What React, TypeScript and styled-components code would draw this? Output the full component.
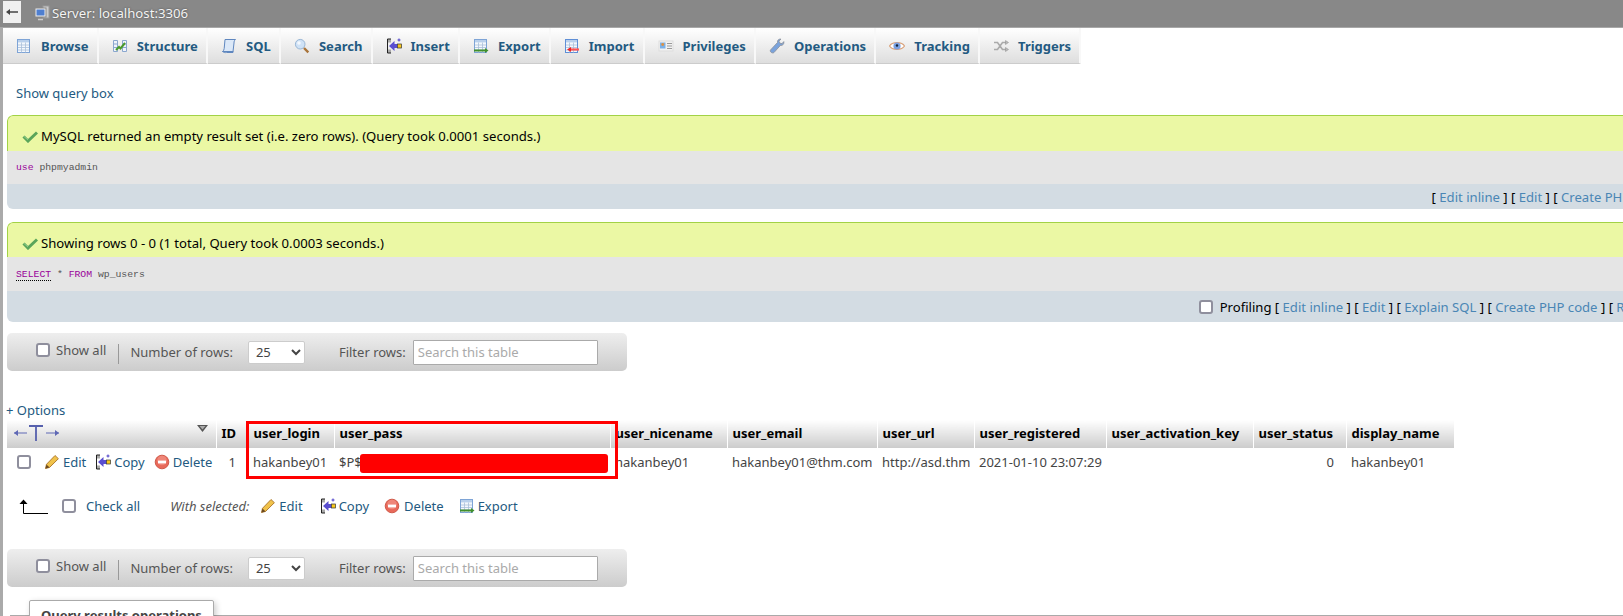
import React from "react";
import styled, { createGlobalStyle } from "styled-components";

const Global = createGlobalStyle`
  html, body { margin: 0; padding: 0; height: 616px; overflow: hidden; background: #fff; }
  body { font-family: "Noto Sans", "Open Sans", sans-serif; font-size: 13px; color: #444; }
  #root { width: 1623px; height: 616px; overflow: hidden; }
`;

const TopBar = styled.header`
  width: 1623px; height: 27px; background: #888; display: flex; align-items: flex-start;
  border-bottom: 1px solid #a8a8a8; box-sizing: content-box;
`;
const BackButton = styled.div`
  width: 18px; height: 22px; margin: 1px 0 0 3px; background: #f0f0f0; display: flex; align-items: center; justify-content: center;
`;
const ServerLabel = styled.div`
  display: flex; align-items: center; gap: 2px; margin: 4px 0 0 13px; height: 18px; color: #f4f4f4;
  text-shadow: 0 0 2px #444; font-size: 13.2px; white-space: nowrap;
`;
const Body = styled.div`
  width: 1679px; border-left: 3px solid #aaa; height: 588px; box-sizing: border-box;
`;
const Tabs = styled.nav`
  display: flex; height: 36px; width: max-content;
`;
const Tab = styled.a`
  display: flex; align-items: center; gap: 9px; height: 36px; box-sizing: border-box; padding: 0 8.2px 0 13px;
  font-weight: 700; color: #235a81; background: linear-gradient(#fff, #dedede); border-bottom: 1px solid #ccc;
  border-right: 2px solid #f8f8f8; white-space: nowrap;
`;
const QueryLink = styled.a`
  display: block; color: #235a81; margin: 20px 0 0 13px; height: 18px; line-height: 18px;
`;
const Message = styled.section<{ $top: number }>`
  margin: ${p => p.$top}px 0 0 4px; border-radius: 6px 6px 0 6px; overflow: hidden;
`;
const Success = styled.div<{ $h: number }>`
  height: ${p => p.$h}px; box-sizing: border-box; background: #ebf8a4; border: 1px solid #a2d246; border-width: 1px 0 0 1px;
  border-radius: 6px 0 0 0; display: flex; align-items: flex-start; gap: 3px; padding: 11px 0 0 14px; color: #000; font-size: 13.12px; line-height: 18px;
`;
const SqlBox = styled.pre<{ $h: number }>`
  height: ${p => p.$h}px; margin: 0; padding: 0 0 0 9px; box-sizing: border-box; background: #e5e5e5; display: flex; align-items: center; white-space: pre;
  font-family: "Liberation Mono", monospace; font-size: 9.75px; color: #555;
`;
const Keyword = styled.span<{ $doc?: boolean }>`
  color: #909; ${p => p.$doc ? "border-bottom: 1px dotted #000;" : ""}
`;
const ToolBar = styled.div<{ $h: number }>`
  height: ${p => p.$h}px; background: #d3dce3; display: flex; align-items: center; justify-content: flex-end; padding-right: 8px; color: #000; white-space: pre; font-size: 13.1px;
`;
const ToolLink = styled.a`color: #4a86b5;`;
const Box = styled.input.attrs({ type: "checkbox" })<{ $m?: string }>`
  appearance: none; width: 14px; height: 14px; margin: ${p => p.$m ?? "0"}; box-sizing: border-box; flex: none;
  border: 2px solid #8f8f9d; border-radius: 3px; background: #fff;
`;
const Pager = styled.div<{ $top: number }>`
  margin: ${p => p.$top}px 0 0 4px; width: 620px; height: 38px; border-radius: 5px; box-sizing: border-box;
  background: linear-gradient(#eee, #ccc); display: flex; align-items: center; padding-left: 29px; color: #555;
`;
const ShowAll = styled.label`
  display: flex; align-items: center; gap: 6px; margin-top: -4px;
`;
const Divider = styled.span`
  width: 1px; height: 20px; background: #999; margin: 4px 11px 0 12px;
`;
const RowSelect = styled.select`
  width: 57px; height: 23px; margin-left: 15px; background: #fff; border: 1px solid #ccc; border-radius: 2px;
  font: 13px "Noto Sans", sans-serif; color: #444; padding-left: 3px;
`;
const FilterLabel = styled.span`margin-left: 34px;`;
const Filter = styled.input`
  width: 185px; height: 25px; margin-left: 7px; box-sizing: border-box; border: 1px solid #aaa; background: #fff; border-radius: 1px;
  font: 13px "Noto Sans", sans-serif; padding: 0 4px; &::placeholder { color: #aaa; opacity: 1; }
`;
const Options = styled.a`
  display: block; color: #235a81; margin: 30px 0 0 3px; height: 19px; line-height: 19px;
`;
const TableWrap = styled.div`
  position: relative; margin-left: 4px; width: max-content;
`;
const Grid = styled.table`
  table-layout: fixed; border-collapse: collapse; width: 1447px;
`;
const Head = styled.th<{ $w: number }>`
  width: ${p => p.$w}px; height: 28px; box-sizing: border-box; padding: 0 5px 2px; text-align: left; color: #000; font-weight: 700; font-size: 13px;
  background: linear-gradient(#fff, #ccc); border-right: 1px solid #fff; white-space: nowrap; overflow: hidden;
`;
const HeadInner = styled.div`
  display: flex; align-items: center; justify-content: space-between; padding: 0 3px 0 1px;
  & > svg:last-child { margin-top: -9px; }
`;
const Cell = styled.td<{ $right?: boolean }>`
  height: 31px; box-sizing: border-box; padding: 0 ${p => p.$right ? "12px" : "5px"} 3px 5px; text-align: ${p => p.$right ? "right" : "left"}; white-space: nowrap; color: #444; position: relative;
`;
const ActionsRow = styled.div`
  display: flex; align-items: center; padding-left: 5px;
`;
const Action = styled.a<{ $gap?: number; $m?: number }>`
  display: inline-flex; align-items: center; gap: ${p => p.$gap ?? 3}px; color: #235a81; margin-left: ${p => p.$m ?? 0}px;
`;
const Frame = styled.div`
  position: absolute; left: 239px; top: 1px; width: 372px; height: 58px; box-sizing: border-box; border: 3px solid #f00; pointer-events: none;
`;
const Redaction = styled.span`
  position: absolute; left: 26px; top: 6px; width: 248px; height: 19px; background: #f00; border-radius: 3px;
`;
const BulkBar = styled.div`
  display: flex; align-items: center; margin: 15px 0 0 16px; height: 24px;
`;
const CheckAll = styled.a`color: #235a81; margin-left: 10px;`;
const WithSelected = styled.em`margin-left: 30px; color: #555;`;
const OpsSet = styled.fieldset`
  margin: 13px 0 0 7px; padding: 0; border: 0; border-top: 1px solid #aaa; height: 30px;
`;
const OpsLegend = styled.legend`
  margin-left: 19px; padding: 5px 11px; width: 185px; box-sizing: border-box; border: 1px solid #aaa; border-radius: 2px 2px 0 0; background: #fff;
  box-shadow: 2px 2px 6px rgba(0,0,0,.2); font-weight: 700; color: #444; line-height: 18px; white-space: nowrap;
`;
const Glyph = styled.svg`flex: none; display: block;`;

type S = { size?: number };
const Ic = ({ size = 16, children }: S & { children: React.ReactNode }) => (
  <Glyph width={size} height={size} viewBox="0 0 16 16" fill="none">{children}</Glyph>
);
const TableLines = ({ c }: { c: string }) => (
  <>
    <rect x="1.5" y="1.500" width="12" height="13" fill="#f4f8fd" stroke={c} />
    <rect x="2" y="2" width="11" height="2.400" fill="#b9d0ec" />
    <path d="M2 7h11M2 9.500h11M2 12h11M5.500 4.500v10M9.500 4.500v10" stroke="#a9bfd9" strokeWidth=".8" />
  </>
);
const Browse = () => <Ic><TableLines c="#7ea4d6" /></Ic>;
const Structure = () => (
  <Ic>
    <path d="M1.500 2.500h4v11h-4zM10.500 2.500h4v11h-4z" fill="#f0f4fb" stroke="#8aa7cf" />
    <path d="M1.500 6h4M1.500 9.500h4M10.500 6h4M10.500 9.500h4" stroke="#8aa7cf" />
    <path d="M4 12l3-3 1.500 1.500L13 5" stroke="#4a9a2c" strokeWidth="2" />
  </Ic>
);
const Sql = () => (
  <Ic>
    <path d="M4 1.500h10.500c-1.200 1-1.500 2-1.500 3.500L12 13.500H1.500c1-.6 1.600-1.500 1.700-3z" fill="#dbe8f8" stroke="#5f87bf" />
    <path d="M1.500 13.500c1.500 1.300 3 1.200 4 1h6.500l.5-1" stroke="#5f87bf" />
  </Ic>
);
const Search = () => (
  <Ic>
    <circle cx="6.200" cy="6.200" r="4.800" fill="#cfe2f6" stroke="#9ab7d6" />
    <circle cx="5" cy="5" r="1.800" fill="#f3f8fe" />
    <path d="M10 10l4.300 4.300" stroke="#a8743a" strokeWidth="2.400" />
  </Ic>
);
const Insert = () => (
  <Ic>
    <rect x="1.500" y="1" width="3.500" height="3.500" fill="#aaa" />
    <rect x="1.500" y="11.500" width="3.500" height="3.500" fill="#aaa" />
    <path d="M5 1h-3.500v14H5" stroke="#222" />
    <path d="M3 8l5.500-5v3H11.500v4H8.500v3z" fill="#5a4fd0" />
    <rect x="11.500" y="6" width="4" height="4" fill="#f7c81e" stroke="#333" strokeWidth=".7" />
    <path d="M13 .5v3M11.500 2h3" stroke="#4a3fc8" strokeWidth="1" />
  </Ic>
);
const Export = () => (
  <Ic>
    <TableLines c="#7ea4d6" />
    <path d="M1 12.500h11" stroke="#3f8f2b" strokeWidth="2" /><path d="M12 10l3.500 2.500L12 15z" fill="#3f8f2b" />
  </Ic>
);
const Import = () => (
  <Ic>
    <TableLines c="#5f8fd6" />
    <path d="M6 11.500h9" stroke="#f55" strokeWidth="2.200" /><path d="M7 9l-4 2.500L7 14z" fill="#e22" />
  </Ic>
);
const Privileges = () => (
  <Ic>
    <rect x="1" y="3" width="14" height="10" fill="#f2f2f2" stroke="#ddd" />
    <rect x="2" y="4.500" width="5.500" height="6" fill="#7ab0e8" />
    <circle cx="4.700" cy="6.500" r="1.400" fill="#e0913f" />
    <path d="M9 5.500h5M9 8h5M9 10.500h5" stroke="#999" />
  </Ic>
);
const Wrench = () => (
  <Ic>
    <path d="M1.500 12l7-7.500c-.4-2 1-3.600 3.400-3.500L10 3.200l.9 2 2.200.4 1.700-2c.5 2.300-1 4.200-3.500 3.900L5 14.500c-1.500 1.300-4.600-.7-3.500-2.500z" fill="#7aa3dc" stroke="#8a8f98" strokeWidth=".8" />
  </Ic>
);
const Eye = () => (
  <Ic>
    <path d="M.5 8C3 3.500 13 3.500 15.500 8 13 12.500 3 12.500.5 8z" fill="#fff" stroke="#d9a27c" strokeWidth="1.200" />
    <circle cx="8" cy="8" r="3.600" fill="#7b9fe0" /><circle cx="8" cy="7.500" r="1.200" fill="#123" />
  </Ic>
);
const Triggers = () => (
  <Ic>
    <path d="M1 4.500h3.500l5 7H13M1 11.500h3.500l5-7H13" stroke="#aaa" strokeWidth="1.600" />
    <path d="M12.500 2.500l3 2-3 2zM12.500 9.500l3 2-3 2z" fill="#bbb" stroke="#888" strokeWidth=".5" />
  </Ic>
);
const Pencil = () => (
  <Ic>
    <path d="M1.500 14.500l1-4.200 8.500-8.800 3.400 3.200-8.800 8.700z" fill="#f0c24a" stroke="#a9742a" strokeWidth=".9" />
    <path d="M1.500 14.500l1-4 3.100 3z" fill="#6b4a22" />
  </Ic>
);
const DeleteIcon = () => (
  <Ic>
    <circle cx="8" cy="8" r="6.800" fill="#e8695a" stroke="#d05a4a" />
    <circle cx="8" cy="6.500" r="4.800" fill="#f49a8d" opacity=".6" />
    <rect x="4" y="6.600" width="8" height="2.800" fill="#fff" />
  </Ic>
);
const ServerIcon = () => (
  <Ic>
    <rect x="9" y="1" width="6" height="12" fill="#ccc" stroke="#999" />
    <rect x="1" y="3" width="11" height="9" fill="#eee" stroke="#888" />
    <rect x="2.500" y="4.500" width="8" height="6" fill="#4f7fd0" />
    <path d="M4 14.500h5" stroke="#ccc" strokeWidth="1.500" />
  </Ic>
);
const ColumnsHandle = () => (
  <Glyph width="47" height="18" viewBox="0 0 47 18" fill="none">
    <path d="M1 9h13M33 9h13" stroke="#5f68b5" strokeWidth="1" />
    <path d="M1 9l4-3v6zM46 9l-4-3v6z" fill="#5f68b5" />
    <path d="M16 2h14M23 2v15" stroke="#5660ad" strokeWidth="1.800" />
  </Glyph>
);
const SortCaret = () => (
  <Glyph width="11" height="7" viewBox="0 0 11 7">
    <path d="M0 0h11L5.500 7z" fill="#555" /><path d="M2.500 1h6L5.500 4.500z" fill="#aaa" />
  </Glyph>
);
const ArrowUp = () => (
  <Glyph width="29" height="15" viewBox="0 0 29 15" fill="none">
    <path d="M4.500 4v10.500H29" stroke="#000" /><path d="M0.500 5l4-4.500 4 4.500z" fill="#000" />
  </Glyph>
);
const LeftArrow = () => (
  <Glyph width="12" height="8" viewBox="0 0 12 8" fill="none">
    <path d="M3 4h9" stroke="#444" strokeWidth="1.500" /><path d="M0 4l4-3v6z" fill="#444" />
  </Glyph>
);
const Check = () => (
  <Glyph width="16" height="12" viewBox="0 0 16 12" fill="none" style={{ marginTop: 4 }}>
    <path d="M1.500 5.500l4.500 4.500L15 1.500" stroke="#5aa55a" strokeWidth="3" />
    <path d="M2 5.500l4 3.500" stroke="#8fcf8f" strokeWidth="1" />
  </Glyph>
);

const tabs: [string, React.FC][] = [
  ["Browse", Browse], ["Structure", Structure], ["SQL", Sql], ["Search", Search], ["Insert", Insert], ["Export", Export],
  ["Import", Import], ["Privileges", Privileges], ["Operations", Wrench], ["Tracking", Eye], ["Triggers", Triggers],
];
const cols: [string, number][] = [
  ["ID", 32], ["user_login", 86], ["user_pass", 276], ["user_nicename", 117], ["user_email", 150], ["user_url", 97],
  ["user_registered", 132], ["user_activation_key", 147], ["user_status", 93], ["display_name", 108],
];

const Links = ({ items }: { items: string[] }) => (
  <>
    {items.map((t, i) => (
      <React.Fragment key={t}>
        {i > 0 ? " " : ""}[ <ToolLink>{t}</ToolLink> ]
      </React.Fragment>
    ))}
  </>
);

const PagerBar = ({ top }: { top: number }) => (
  <Pager $top={top}>
    <ShowAll><Box />Show all</ShowAll>
    <Divider />
    <span>Number of rows:</span>
    <RowSelect defaultValue="25"><option>25</option><option>50</option></RowSelect>
    <FilterLabel>Filter rows:</FilterLabel>
    <Filter placeholder="Search this table" />
  </Pager>
);

export default function App() {
  return (
    <>
      <Global />
      <TopBar>
        <BackButton><LeftArrow /></BackButton>
        <ServerLabel><ServerIcon />Server: localhost:3306</ServerLabel>
      </TopBar>
      <Body>
        <Tabs>
          {tabs.map(([label, I]) => <Tab key={label}><I />{label}</Tab>)}
        </Tabs>
        <QueryLink>Show query box</QueryLink>
        <Message $top={13}>
          <Success $h={36}><Check />MySQL returned an empty result set (i.e. zero rows). (Query took 0.0001 seconds.)</Success>
          <SqlBox $h={33}><span><Keyword>use</Keyword> phpmyadmin</span></SqlBox>
          <ToolBar $h={25}><Links items={["Edit inline", "Edit", "Create PHP code"]} /></ToolBar>
        </Message>
        <Message $top={13}>
          <Success $h={35}><Check />Showing rows 0 - 0 (1 total, Query took 0.0003 seconds.)</Success>
          <SqlBox $h={34}><span><Keyword $doc>SELECT</Keyword> * <Keyword>FROM</Keyword> wp_users</span></SqlBox>
          <ToolBar $h={31}><Box $m="0 7px 0 0" />Profiling <Links items={["Edit inline", "Edit", "Explain SQL", "Create PHP code", "Refresh"]} /></ToolBar>
        </Message>
        <PagerBar top={11} />
        <Options>+ Options</Options>
        <TableWrap>
          <Grid>
            <thead>
              <tr>
                <Head $w={209}><HeadInner><ColumnsHandle /><SortCaret /></HeadInner></Head>
                {cols.map(([c, w]) => <Head key={c} $w={w}>{c}</Head>)}
              </tr>
            </thead>
            <tbody>
              <tr>
                <Cell>
                  <ActionsRow>
                    <Box />
                    <Action $m={13}><Pencil />Edit</Action>
                    <Action $m={9}><Insert />Copy</Action>
                    <Action $m={9}><DeleteIcon />Delete</Action>
                  </ActionsRow>
                </Cell>
                <Cell $right>1</Cell>
                <Cell>hakanbey01</Cell>
                <Cell>$P$<Redaction /></Cell>
                <Cell>hakanbey01</Cell>
                <Cell>hakanbey01@thm.com</Cell>
                <Cell>http://asd.thm</Cell>
                <Cell>2021-01-10 23:07:29</Cell>
                <Cell />
                <Cell $right>0</Cell>
                <Cell>hakanbey01</Cell>
              </tr>
            </tbody>
          </Grid>
          <Frame />
        </TableWrap>
        <BulkBar>
          <ArrowUp />
          <Box $m="0 0 0 14px" />
          <CheckAll>Check all</CheckAll>
          <WithSelected>With selected:</WithSelected>
          <Action $m={11}><Pencil />Edit</Action>
          <Action $m={17}><Insert />Copy</Action>
          <Action $m={15} $gap={4}><DeleteIcon />Delete</Action>
          <Action $m={15}><Export />Export</Action>
        </BulkBar>
        <PagerBar top={31} />
        <OpsSet><OpsLegend>Query results operations</OpsLegend></OpsSet>
      </Body>
    </>
  );
}
